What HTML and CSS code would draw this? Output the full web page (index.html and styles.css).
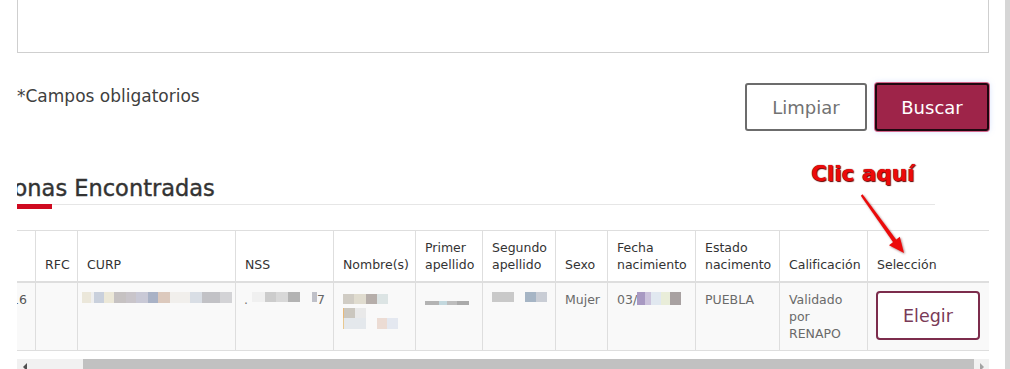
FILE: index.html
```html
<!DOCTYPE html>
<html lang="es">
<head>
<meta charset="utf-8">
<title>Personas Encontradas</title>
<link rel="stylesheet" href="styles.css">
</head>
<body>
<div class="page">
  <div class="main">
    <div class="textbox"></div>

    <div class="actions">
      <p class="required">*Campos obligatorios</p>
      <div class="buttons">
        <button class="btn btn-outline" type="button">Limpiar</button>
        <button class="btn btn-primary" type="button">Buscar</button>
      </div>
    </div>

    <section class="results">
      <div class="title-clip"><h2 class="title">Personas Encontradas</h2></div>
      <div class="underline"><span class="accent"></span><span class="rule"></span></div>

      <div class="table-clip">
        <table class="grid">
          <colgroup>
            <col class="c-id"><col class="c-rfc"><col class="c-curp"><col class="c-nss"><col class="c-nom">
            <col class="c-ap1"><col class="c-ap2"><col class="c-sexo"><col class="c-fecha"><col class="c-edo">
            <col class="c-cal"><col class="c-sel">
          </colgroup>
          <thead>
            <tr>
              <th></th>
              <th>RFC</th>
              <th>CURP</th>
              <th>NSS</th>
              <th>Nombre(s)</th>
              <th>Primer apellido</th>
              <th>Segundo apellido</th>
              <th>Sexo</th>
              <th>Fecha nacimiento</th>
              <th>Estado nacimento</th>
              <th>Calificación</th>
              <th>Selección</th>
            </tr>
          </thead>
          <tbody>
            <tr>
              <td class="num">16</td>
              <td></td>
              <td><span class="px px-curp"></span></td>
              <td class="nss"><span class="dot">.</span><span class="px px-nss1"></span><span class="px px-nss2"></span><span class="seven">7</span></td>
              <td>
                <span class="px px-nom1"></span>
                <span class="nom-row"><span class="px px-nom2"></span></span>
                <span class="nom-row"><span class="px px-nom3"></span><span class="px px-nom4"></span></span>
              </td>
              <td><span class="px px-ap1"></span></td>
              <td class="ap2"><span class="px px-ap2a"></span><span class="px px-ap2b"></span></td>
              <td>Mujer</td>
              <td>03/<span class="px px-fecha"></span></td>
              <td>PUEBLA</td>
              <td>Validado por RENAPO</td>
              <td><button class="btn-choose" type="button">Elegir</button></td>
            </tr>
          </tbody>
        </table>
      </div>

      <div class="hscroll">
        <span class="sb-btn"><span class="tri-left"></span></span>
        <span class="sb-track"><span class="sb-thumb"></span></span>
        <span class="sb-btn"><span class="tri-right"></span></span>
      </div>
    </section>
  </div>
  <div class="vscroll"></div>

  <div class="callout">Clic aquí</div>
  <svg class="callout-arrow" width="1010" height="369" viewBox="0 0 1010 369" aria-hidden="true">
    <polygon points="862.5,194.2 860.8,195.8 893.3,242.5 896.5,240.1" fill="#ec0a0a"/>
    <polygon points="904,253 899.8,236.8 889,245.3" fill="#ec0a0a"/>
  </svg>
</div>
</body>
</html>
```

FILE: styles.css
```css
* { box-sizing: border-box; }

body {
  margin: 0;
  font-family: "DejaVu Sans", "Noto Sans", sans-serif;
  color: #333;
  background: #fff;
  overflow: hidden;
}

.page {
  position: relative;
  display: flex;
  width: 1010px;
  height: 369px;
  overflow: hidden;
}

.main {
  flex: none;
  width: 972px;
  margin-left: 17px;
}

.vscroll {
  flex: none;
  width: 5px;
  margin-left: 16px;
  background: #d6d6d6;
}

/* textarea remnant */
.textbox {
  height: 53px;
  border: 1px solid #cfcfcf;
  border-top: none;
}

/* actions row */
.actions {
  display: flex;
  justify-content: space-between;
  align-items: flex-start;
  margin-top: 30px;
}

.required {
  margin: 2px 0 0;
  font-size: 17px;
  line-height: 22px;
  color: #404040;
}

.buttons {
  display: flex;
  gap: 8px;
}

.btn {
  height: 48px;
  font-family: inherit;
  font-size: 18px;
  border-radius: 3px;
  padding: 0;
}

.btn-outline {
  width: 122px;
  background: #fff;
  border: 2px solid #6c6c6c;
  color: #727272;
}

.btn-primary {
  width: 114px;
  background: #9e2449;
  border: 2px solid #1e0710;
  color: #fff;
  box-shadow: 0 0 0 1px #d4678c, 0 0 6px rgba(120, 160, 255, 0.35);
}

/* results */
.results {
  margin-top: 43px;
}

.title-clip {
  overflow: hidden;
}

.title {
  margin: 0 0 0 -51px;
  padding-bottom: 2px;
  font-size: 22.5px;
  line-height: 28px;
  font-weight: normal;
  color: #333;
  white-space: nowrap;
  -webkit-text-stroke: 0.4px #333;
}

.underline {
  display: flex;
  width: 918px;
  height: 5px;
}

.accent {
  width: 35px;
  height: 5px;
  background: #cf0a20;
}

.rule {
  flex: 1;
  height: 1px;
  background: #e6e6e6;
}

.table-clip {
  overflow: hidden;
  margin-top: 21px;
}

.grid {
  border-collapse: collapse;
  table-layout: fixed;
  width: 1012px;
  margin-left: -40px;
}

.c-id { width: 58px; }
.c-rfc { width: 42px; }
.c-curp { width: 158px; }
.c-nss { width: 98px; }
.c-nom { width: 82px; }
.c-ap1 { width: 67px; }
.c-ap2 { width: 73px; }
.c-sexo { width: 52px; }
.c-fecha { width: 88px; }
.c-edo { width: 84px; }
.c-cal { width: 88px; }
.c-sel { width: 122px; }

.grid th,
.grid td {
  border: 1px solid #dedede;
  padding: 8px 4px 8px 9px;
  text-align: left;
  font-size: 12.5px;
  line-height: 17px;
}

.grid th {
  vertical-align: bottom;
  font-weight: normal;
  color: #333;
  background: #fff;
  border-bottom: 2px solid #dedede;
  height: 50px;
}

.grid td {
  vertical-align: top;
  color: #6a6a6a;
  background: #f9f9f9;
  height: 67px;
}

.grid td.num {
  text-align: right;
  padding-right: 8px;
  color: #555;
}

/* pixelated (blurred) data */
.px {
  display: inline-block;
  vertical-align: top;
}

.px-curp {
  margin: 1px 0 0 -5px;
  width: 150px;
  height: 11px;
  background: linear-gradient(to right,
    #ebe7da 0 9px, #efefef 9px 12px, #c9d0dc 12px 22px, #ece8d8 22px 32px,
    #c6c2c2 32px 44px, #c9c5ca 44px 54px, #c9c9d6 54px 66px, #a9b2c6 66px 76px,
    #dcc9bd 76px 88px, #f1efec 88px 108px, #d9dee5 108px 120px, #c2c2c6 120px 138px,
    #d3d3d6 138px 150px);
}

.nss { white-space: nowrap; }
.dot { margin-left: -1px; color: #777; }
.px-nss1 {
  margin: 1px 0 0 4px;
  width: 48px;
  height: 10px;
  background: linear-gradient(to right, #f0f0f0 0 13px, #cccccc 13px 24px, #d8d8d8 24px 36px, #b3b3b3 36px 48px);
}
.px-nss2 {
  margin: 1px 0 0 12px;
  width: 5px;
  height: 10px;
  background: #bfc0c8;
}
.seven { color: #666; }

.px-nom1 {
  margin-top: 3px;
  width: 45px;
  height: 10px;
  background: linear-gradient(to right, #d0ccc4 0 11px, #e0dccf 11px 23px, #b6aeaa 23px 34px, #dce4e4 34px 45px);
}
.nom-row {
  display: flex;
  gap: 11px;
  width: 60px;
}
.nom-row:first-of-type { margin-top: 9px; }
.px-nom2 {
  width: 23px;
  height: 10px;
  background: linear-gradient(to right, #e8b878 0 1px, #cbc7bf 1px 12px, #e9e9e9 12px 23px);
}
.px-nom3 {
  width: 23px;
  height: 11px;
  background: linear-gradient(to right, #e8c890 0 1px, #e4e8ec 1px 23px);
}
.px-nom4 {
  width: 21px;
  height: 11px;
  background: linear-gradient(to right, #ecdcd4 0 10px, #e4e8f0 10px 21px);
}

.px-ap1 {
  margin-top: 10px;
  width: 44px;
  height: 4px;
  background: linear-gradient(to right, #b3b3b3 0 14px, #c3d8de 14px 22px, #bdbdbd 22px 32px, #aaaaaa 32px 44px);
}

.ap2 { white-space: nowrap; padding-left: 8px; }
.px-ap2a {
  margin-top: 1px;
  width: 22px;
  height: 10px;
  background: #c9c9c9;
}
.px-ap2b {
  margin: 1px 0 0 11px;
  width: 22px;
  height: 10px;
  background: linear-gradient(to right, #a6b5c5 0 11px, #c9cdd5 11px 22px);
}

.px-fecha {
  margin-top: 1px;
  width: 44px;
  height: 13px;
  background: linear-gradient(to right, #a899c2 0 8px, #ccc3dc 8px 14px, #e1e8f0 14px 24px, #e9edd9 24px 33px, #a8a1a1 33px 44px);
}

.btn-choose {
  display: block;
  width: 104px;
  height: 49px;
  padding: 0;
  margin-left: -1px;
  background: #fff;
  border: 2px solid #7c2c4c;
  border-radius: 4px;
  color: #7a3a57;
  font-family: inherit;
  font-size: 17.5px;
}

/* horizontal scrollbar */
.hscroll {
  display: flex;
  height: 15px;
  margin-top: 8px;
  background: #f1f1f1;
}

.sb-btn {
  flex: none;
  width: 15px;
  display: flex;
  align-items: center;
  justify-content: center;
}

.tri-left {
  width: 0;
  height: 0;
  border-top: 4px solid transparent;
  border-bottom: 4px solid transparent;
  border-right: 4px solid #505050;
}

.tri-right {
  width: 0;
  height: 0;
  border-top: 4px solid transparent;
  border-bottom: 4px solid transparent;
  border-left: 4px solid #a3a3a3;
}

.sb-track {
  flex: 1;
  display: flex;
  padding-left: 51px;
}

.sb-thumb {
  flex: 1;
  background: #c1c1c1;
}

/* annotation overlay */
.callout {
  position: absolute;
  left: 811px;
  top: 161px;
  font-family: "DejaVu Sans", sans-serif;
  font-weight: bold;
  font-size: 21.5px;
  line-height: 26px;
  color: #ec0a0a;
  white-space: nowrap;
  text-shadow: 0 0 1px #5a0000, 1px 1px 1px #6a0000;
}

.callout-arrow {
  position: absolute;
  left: 0;
  top: 0;
  pointer-events: none;
  filter: drop-shadow(1px 1px 1px rgba(90, 0, 0, 0.5));
}
```
